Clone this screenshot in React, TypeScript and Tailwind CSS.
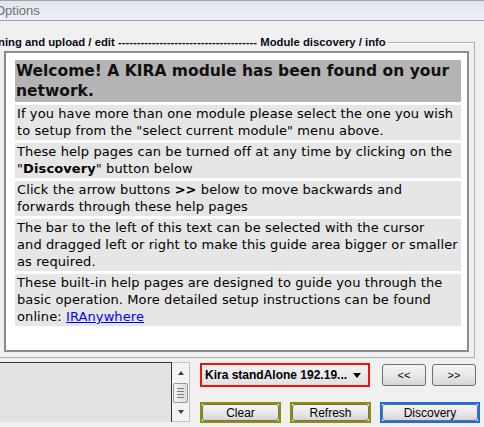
import React from 'react';

const dashes = '-'.repeat(37);

function TitleStrip() {
  return (
    <div className="flex h-[21px] items-center border-y border-[#a3a3a3] bg-gradient-to-b from-[#dfe4ef] to-[#eff1f7]">
      <span className="-ml-[5px] text-[13px] leading-none text-[#6f6f6f]">Options</span>
    </div>
  );
}

function HelpBlock({ children }: { children: React.ReactNode }) {
  return (
    <div className="bg-[#e6e6e6] pb-[1px] pl-[2px] text-[13px] leading-[17px] tracking-[0.1px] whitespace-nowrap text-black">
      {children}
    </div>
  );
}

function HelpPanel() {
  return (
    <div className="mt-[2px] h-[301px] border-2 border-[#8c8c8c] bg-white pl-[9px] pr-[6px] pt-[7px] font-['DejaVu_Sans',Verdana,sans-serif]">
      <div className="flex flex-col gap-[3px]">
        <div className="h-[42px] bg-[#b4b4b4] pl-[1px] pt-[1px] text-[15.5px] font-bold leading-[20px] whitespace-nowrap text-[#111]">
          Welcome! A KIRA module has been found on your
          <br />
          network.
        </div>
        <HelpBlock>
          If you have more than one module please select the one you wish
          <br />
          to setup from the "select current module" menu above.
        </HelpBlock>
        <HelpBlock>
          These help pages can be turned off at any time by clicking on the
          <br />
          "<b>Discovery</b>" button below
        </HelpBlock>
        <HelpBlock>
          Click the arrow buttons <b>&gt;&gt;</b> below to move backwards and
          <br />
          forwards through these help pages
        </HelpBlock>
        <HelpBlock>
          The bar to the left of this text can be selected with the cursor
          <br />
          and dragged left or right to make this guide area bigger or smaller
          <br />
          as required.
        </HelpBlock>
        <HelpBlock>
          These built-in help pages are designed to guide you through the
          <br />
          basic operation. More detailed setup instructions can be found
          <br />
          online:{' '}
          <a href="#" className="text-[#0000ff] underline">
            IRAnywhere
          </a>
        </HelpBlock>
      </div>
    </div>
  );
}

function Scrollbar() {
  return (
    <div className="flex h-[60px] w-[18px] flex-col items-center border border-l-0 border-[#c2c2c2] bg-[#f3f3f3]">
      <div className="flex h-[17px] w-full items-center justify-center pt-[2px]">
        <div className="h-0 w-0 border-x-[3.5px] border-b-[4px] border-x-transparent border-b-[#404040]" />
      </div>
      <div className="w-full flex-1 px-[1px] pt-[3px]">
        <div className="flex h-[20px] flex-col items-center justify-center gap-[2px] rounded-[2px] border border-[#979797] bg-gradient-to-r from-[#f4f4f4] to-[#dcdcdc]">
          <div className="h-px w-[7px] bg-[#7a7a7a]" />
          <div className="h-px w-[7px] bg-[#7a7a7a]" />
          <div className="h-px w-[7px] bg-[#7a7a7a]" />
          <div className="h-px w-[7px] bg-[#7a7a7a]" />
        </div>
      </div>
      <div className="flex h-[17px] w-full items-center justify-center pb-[2px]">
        <div className="h-0 w-0 border-x-[3.5px] border-t-[4px] border-x-transparent border-t-[#404040]" />
      </div>
    </div>
  );
}

function WinButton({ label, className }: { label: string; className?: string }) {
  return (
    <div
      className={
        'flex items-center justify-center rounded-[3px] border border-[#707070] bg-gradient-to-b from-[#f4f4f4] via-[#e9e9e9] to-[#d6d6d6] text-[12px] leading-none text-black ' +
        (className ?? '')
      }
    >
      {label}
    </div>
  );
}

function FramedButton({ label, frame, width }: { label: string; frame: string; width: string }) {
  return (
    <div className={'h-[21px] border-2 ' + frame + ' ' + width}>
      <WinButton label={label} className="h-full w-full" />
    </div>
  );
}

export default function App() {
  return (
    <div className="h-[427px] w-[484px] overflow-hidden bg-[#f0f0f0] font-['Liberation_Sans',Arial,sans-serif] text-black">
      <TitleStrip />
      <fieldset className="-ml-[40px] mt-[14px] w-[515px] border border-[#b0b0b0] pb-[5px] pl-[43px] pr-[5px] shadow-[inset_1px_1px_0_#ffffff]">
        <legend className="-ml-[6px] pr-[2px] text-[11.3px] font-bold leading-[14px] text-[#0a0a1a]">
          ning and upload / edit {dashes} Module discovery / info
        </legend>
        <HelpPanel />
      </fieldset>
      <div className="mt-[4px] flex">
        <div className="-ml-[10px] h-[60px] w-[182px] border-r border-t border-[#333333] bg-[#e3e3e3]" />
        <Scrollbar />
        <div className="ml-[10px] flex flex-col">
          <div className="mt-[1px] flex items-start">
            <div className="flex h-[24px] w-[170px] items-center border-2 border-[#f01010] bg-gradient-to-b from-[#f2f2f2] to-[#e2e2e2] pl-[3px] pr-[7px]">
              <span className="flex-1 text-[12px] font-bold leading-none">Kira standAlone 192.19...</span>
              <div className="h-0 w-0 border-x-[4px] border-t-[5px] border-x-transparent border-t-black" />
            </div>
            <WinButton label="<<" className="ml-[12px] mt-[1px] h-[22px] w-[44px] !text-[11px]" />
            <WinButton label=">>" className="ml-[6px] mt-[1px] h-[22px] w-[44px] !text-[11px]" />
          </div>
          <div className="mt-[15px] flex gap-[9px]">
            <FramedButton label="Clear" frame="border-[#8f8f00]" width="w-[81px]" />
            <FramedButton label="Refresh" frame="border-[#8f8f00]" width="w-[81px]" />
            <FramedButton label="Discovery" frame="border-[#1a6cf0]" width="w-[100px]" />
          </div>
        </div>
      </div>
    </div>
  );
}
